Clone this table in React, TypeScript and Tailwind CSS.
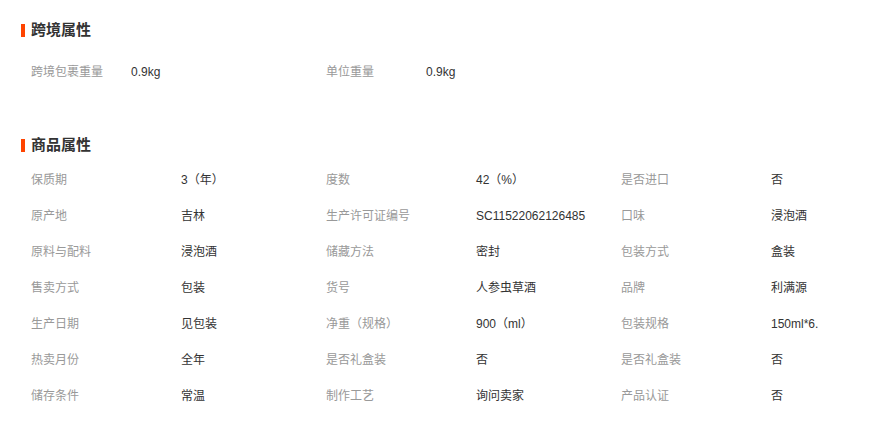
const CROSS_BORDER: [string, string][] = [
  ['跨境包裹重量', '0.9kg'],
  ['单位重量', '0.9kg'],
];

const GOODS: [string, string][] = [
  ['保质期', '3（年）'],
  ['度数', '42（%）'],
  ['是否进口', '否'],
  ['原产地', '吉林'],
  ['生产许可证编号', 'SC11522062126485'],
  ['口味', '浸泡酒'],
  ['原料与配料', '浸泡酒'],
  ['储藏方法', '密封'],
  ['包装方式', '盒装'],
  ['售卖方式', '包装'],
  ['货号', '人参虫草酒'],
  ['品牌', '利满源'],
  ['生产日期', '见包装'],
  ['净重（规格）', '900（ml）'],
  ['包装规格', '150ml*6.'],
  ['热卖月份', '全年'],
  ['是否礼盒装', '否'],
  ['是否礼盒装', '否'],
  ['储存条件', '常温'],
  ['制作工艺', '询问卖家'],
  ['产品认证', '否'],
];

function Heading({ title }: { title: string }) {
  return (
    <div className="flex items-center h-5">
      <span className="w-[4px] h-[13px] bg-[#ff4400]" />
      <h3 className="ml-[6px] text-[15px] font-bold text-[#333] leading-5">{title}</h3>
    </div>
  );
}

export default function App() {
  return (
    <div
      className="w-[876px] h-[428px] bg-white pl-[21px] pt-[20px] overflow-hidden"
      style={{ fontFamily: '"Liberation Sans", "Noto Sans CJK SC", sans-serif' }}
    >
      {/* ── Cross-border ───────────────────────────────────────────── */}
      <Heading title="跨境属性" />
      <div className="mt-[14px] pl-[10px] flex text-[12px]">
        {CROSS_BORDER.map(([k, v], i) => (
          <div key={i} className="flex w-[295px] h-9 items-center">
            <span className="w-[100px] text-[#999]">{k}</span>
            <span className="text-[#333]">{v}</span>
          </div>
        ))}
      </div>

      {/* ── Goods ──────────────────────────────────────────────────── */}
      <div className="mt-[45px]">
        <Heading title="商品属性" />
      </div>
      <div className="mt-[7px] pl-[10px] grid grid-cols-[295px_295px_250px] text-[12px]">
        {GOODS.map(([k, v], i) => (
          <div key={i} className="flex h-9 items-center">
            <span className="w-[150px] text-[#999]">{k}</span>
            <span className="text-[#333]">{v}</span>
          </div>
        ))}
      </div>
    </div>
  );
}
